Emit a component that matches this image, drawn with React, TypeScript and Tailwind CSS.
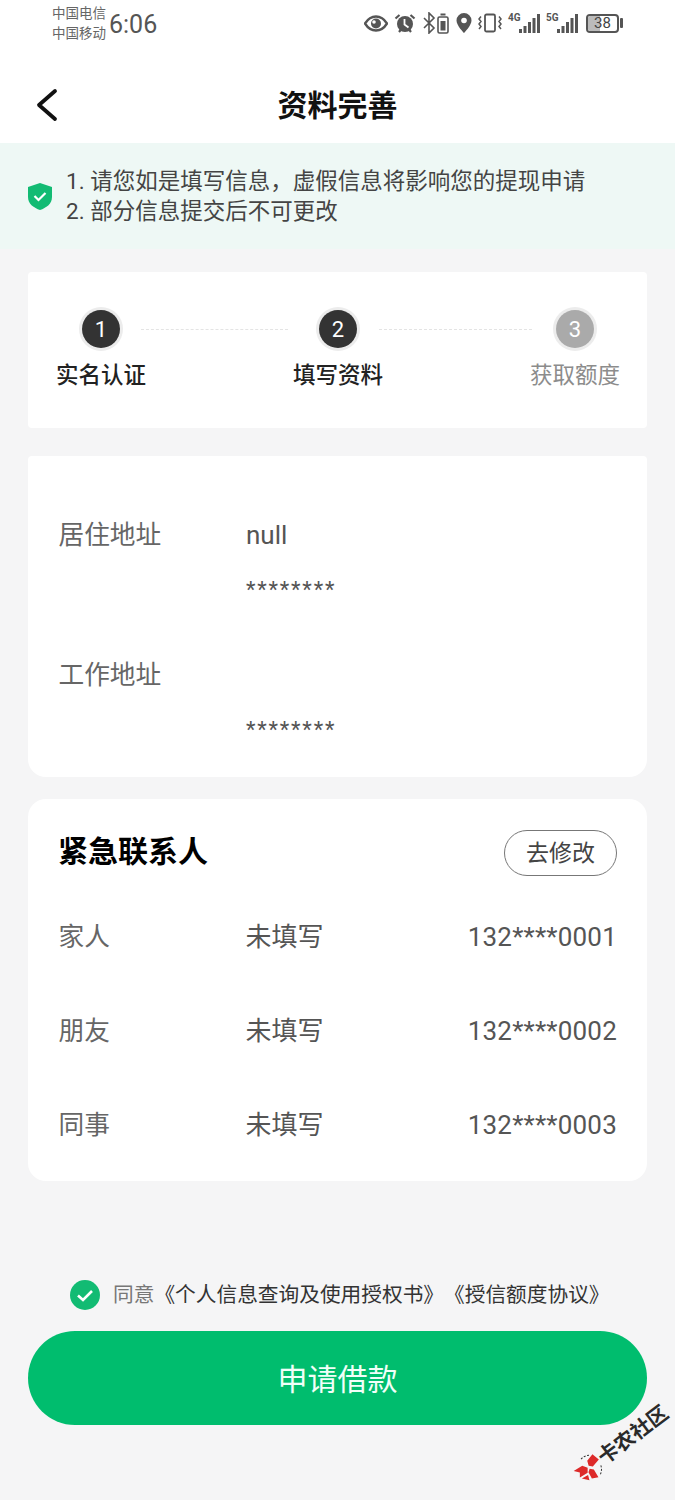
import React from "react";

function Row({ label, name, phone }: { label: string; name: string; phone: string }) {
  return (
    <div className="flex items-center h-[94px] text-[26px] text-[#555]">
      <div className="w-[188px] pl-[0.5px] text-[25.700px] text-[#666]">{label}</div>
      <div className="flex-1 -ml-[0.5px]">{name}</div>
      <div className="tracking-[0.2px]">{phone}</div>
    </div>
  );
}

function Step({ n, label, active }: { n: string; label: string; active: boolean }) {
  return (
    <div className="flex flex-col items-center w-[90px] shrink-0">
      <div className="w-[44px] h-[44px] rounded-full bg-[#ececec] flex items-center justify-center">
        <div className={`w-[38px] h-[38px] rounded-full flex items-center justify-center text-[22px] text-white ${active ? "bg-[#333333]" : "bg-[#aaaaaa]"}`}>
          {n}
        </div>
      </div>
      <div className={`mt-[8px] text-[22.5px] leading-[32px] whitespace-nowrap ${active ? "text-[#222] font-medium" : "text-[#8c8c8c]"}`}>{label}</div>
    </div>
  );
}

function Signal({ tag }: { tag: string }) {
  return (
    <div className="relative w-[32px] h-[22px]">
      <div className="absolute left-0 top-[1px] text-[10px] leading-[10px] font-bold text-[#555]">{tag}</div>
      <svg className="absolute left-0 top-0" width="32" height="22" viewBox="0 0 32 22">
        <rect x="11" y="17" width="3" height="4" fill="#555" />
        <rect x="15.500" y="14" width="3" height="7" fill="#555" />
        <rect x="20" y="10" width="3" height="11" fill="#555" />
        <rect x="24.500" y="6" width="3" height="15" fill="#555" />
        <rect x="29" y="2" width="3" height="19" fill="#555" />
      </svg>
    </div>
  );
}

function StatusIcons() {
  const c = "#555";
  return (
    <div className="flex items-center gap-[6px] -ml-[1px] -translate-x-[1px] -translate-y-[1px]">
      <svg width="24" height="17" viewBox="0 0 24 17"><path d="M1 8.500c3-4.800 7-7 11-7s8 2.200 11 7c-3 4.800-7 7-11 7s-8-2.200-11-7z" fill="none" stroke={c} strokeWidth="2.400" /><circle cx="12" cy="8.500" r="5" fill={c} /><circle cx="10" cy="7" r="1.800" fill="#fff" /></svg>
      <svg width="22" height="21" viewBox="0 0 22 21"><circle cx="11" cy="11" r="8" fill={c} /><path d="M10.500 6v5.500l4 3" stroke="#fff" strokeWidth="1.800" fill="none" /><path d="M1.500 5.500l4-3.500M20.500 5.500l-4-3.500M5 19l2-2.500M17 19l-2-2.500" stroke={c} strokeWidth="2.200" /></svg>
      <svg width="28" height="22" viewBox="0 0 28 22"><path d="M2 6l10 10-5 5V1l5 5L2 16" fill="none" stroke={c} strokeWidth="1.600" /><rect x="16" y="5" width="10" height="16" rx="1.500" fill="none" stroke={c} strokeWidth="1.600" /><rect x="18.500" y="1.500" width="5" height="2" fill={c} /><rect x="18.500" y="9" width="5" height="9.500" fill={c} /></svg>
      <svg width="16" height="20" viewBox="0 0 16 20"><path d="M8 0a7.500 7.500 0 0 0-7.500 7.500C.5 12.500 8 20 8 20s7.500-7.500 7.500-12.500A7.500 7.500 0 0 0 8 0z" fill={c} /><circle cx="8" cy="7.500" r="2.800" fill="#fff" /></svg>
      <svg width="24" height="20" viewBox="0 0 24 20"><rect x="7" y="1.500" width="10" height="17" rx="1.500" fill="none" stroke={c} strokeWidth="1.800" /><path d="M3 3.500l-2 2.500 2 2.500-2 2.500 2 2.500-2 2.500M21 3.500l2 2.500-2 2.500 2 2.500-2 2.500 2 2.500" fill="none" stroke={c} strokeWidth="1.500" /></svg>
      <Signal tag="4G" />
      <Signal tag="5G" />
      <div className="flex items-center ml-[2px]">
        <div className="relative w-[33px] h-[19px] rounded-[4px] border-2 border-[#555] overflow-hidden flex items-center justify-center text-[15px] text-[#444]">
          <div className="absolute inset-y-0 left-0 w-[12px] bg-[#bbb]" />
          <span className="relative">38</span>
        </div>
        <div className="w-[3px] h-[10px] ml-[1px] rounded-[1px] bg-[#555]" />
      </div>
    </div>
  );
}

export default function App() {
  return (
    <div className="relative w-[675px] h-[1500px] overflow-hidden bg-[#f5f5f6] font-['Roboto','Noto_Sans_CJK_SC',sans-serif]">
      {/* Status bar + header */}
      <div className="bg-white h-[143px] flex flex-col">
        <div className="h-[48px] pl-[52px] pr-[51px] flex items-center justify-between">
          <div className="flex items-center">
            <div className="text-[13.500px] leading-[20px] text-[#666] w-[56px] whitespace-nowrap -translate-y-[1px]">
              <div>中国电信</div>
              <div>中国移动</div>
            </div>
            <div className="text-[25px] leading-[30px] text-[#555] ml-[1px] translate-y-[1px]">6:06</div>
          </div>
          <StatusIcons />
        </div>
        <div className="relative flex-1 flex items-center justify-center pt-[19px]">
          <svg className="absolute left-[36px] top-[40px]" width="22" height="34" viewBox="0 0 22 34">
            <path d="M19 3L3 17l16 14" fill="none" stroke="#111" strokeWidth="3.800" strokeLinecap="round" strokeLinejoin="round" />
          </svg>
          <div className="text-[30px] font-bold text-[#111]">资料完善</div>
        </div>
      </div>

      {/* Notice */}
      <div className="h-[106px] bg-[#eef8f5] flex items-center pl-[28px]">
        <svg width="24" height="27" viewBox="0 0 24 27">
          <path d="M12 0l12 4v10c0 7-6 11-12 13C6 25 0 21 0 14V4z" fill="#12bb73" />
          <path d="M6.500 13l4 4 7-7" fill="none" stroke="#fff" strokeWidth="2.200" />
        </svg>
        <div className="ml-[14px] text-[22.500px] leading-[30px] text-[#444]">
          <div>1. 请您如是填写信息，虚假信息将影响您的提现申请</div>
          <div>2. 部分信息提交后不可更改</div>
        </div>
      </div>

      {/* Steps */}
      <div className="mx-[28px] mt-[23px] h-[156px] bg-white rounded-[4px] pl-[28px] pt-[35px] flex items-start">
        <Step n="1" label="实名认证" active />
        <div className="mt-[22px] w-[147px] shrink-0 -ml-[5px] mr-[5px] border-t border-dashed border-[#e4e4e4]" />
        <Step n="2" label="填写资料" active />
        <div className="mt-[22px] w-[153px] shrink-0 -ml-[4px] -mr-[2px] border-t border-dashed border-[#e4e4e4]" />
        <Step n="3" label="获取额度" active={false} />
      </div>

      {/* Address */}
      <div className="mx-[28px] mt-[28px] h-[321px] bg-white rounded-b-[18px] rounded-t-[4px] px-[30px] pt-[60px] text-[26px] text-[#555]">
        <div className="flex h-[38px] items-center">
          <div className="w-[188px] pl-[0.5px] text-[25.700px] text-[#666]">居住地址</div>
          <div>null</div>
        </div>
        <div className="pl-[188px] mt-[17px] h-[38px] leading-[38px] text-[22px] tracking-[1.800px]">********</div>
        <div className="flex h-[38px] items-center mt-[47px]">
          <div className="w-[188px] pl-[0.5px] text-[25.700px] text-[#666]">工作地址</div>
        </div>
        <div className="pl-[188px] mt-[17px] h-[38px] leading-[38px] text-[22px] tracking-[1.800px]">********</div>
      </div>

      {/* Contacts */}
      <div className="mx-[28px] mt-[22px] h-[382px] bg-white rounded-[18px] px-[30px] pt-[31px]">
        <div className="flex items-center justify-between h-[46px]">
          <div className="text-[30px] font-bold text-black -translate-y-[2px]">紧急联系人</div>
          <div className="w-[113px] h-[46px] pt-[2px] rounded-full border border-[#777] flex items-center justify-center text-[23px] text-[#444]">去修改</div>
        </div>
        <div className="mt-[14px]">
          <Row label="家人" name="未填写" phone="132****0001" />
          <Row label="朋友" name="未填写" phone="132****0002" />
          <Row label="同事" name="未填写" phone="132****0003" />
        </div>
      </div>

      {/* Agreement */}
      <div className="mt-[98px] h-[32px] flex items-center justify-start pl-[70px] text-[20.700px] [text-spacing-trim:space-all]">
        <svg width="30" height="30" viewBox="0 0 30 30">
          <circle cx="15" cy="15" r="15" fill="#12bb73" />
          <path d="M8 15.500l5 4.500 9-9" fill="none" stroke="#fff" strokeWidth="2.600" />
        </svg>
        <span className="ml-[13px] text-[#777] whitespace-nowrap translate-y-[1px]">同意</span>
        <span className="text-[#333] whitespace-nowrap translate-y-[1px]">《个人信息查询及使用授权书》《授信额度协议》</span>
      </div>

      {/* Button */}
      <div className="mx-[28px] mt-[20px] h-[94px] rounded-full bg-[#00bd6e] flex items-center justify-center pt-[3px] text-[30px] text-[#f0fff8]">
        申请借款
      </div>

      {/* Watermark */}
      <div className="absolute left-[567px] top-[1411px] w-[100px] h-[72px] flex items-center -rotate-[37deg] origin-center">
        <svg width="30" height="30" viewBox="0 0 30 30" className="shrink-0">
          <path d="M1 8l10 1 3 5-3 4-9-1 3-4zM26 6l2 8-9 2-3-3 2-5zM12 18l3-2 3 3-1 9-6-3zM3 19l7 1-2 5z" fill="#dd2a2a" />
          <path d="M14 3a12 12 0 0 1 9 2M26 20a12 12 0 0 1-6 7" fill="none" stroke="#333" strokeWidth="1" strokeDasharray="2 1.500" />
        </svg>
        <div className="text-[20.500px] font-bold text-[#2a2a2a] whitespace-nowrap -ml-[1px]">卡农社区</div>
      </div>
    </div>
  );
}
